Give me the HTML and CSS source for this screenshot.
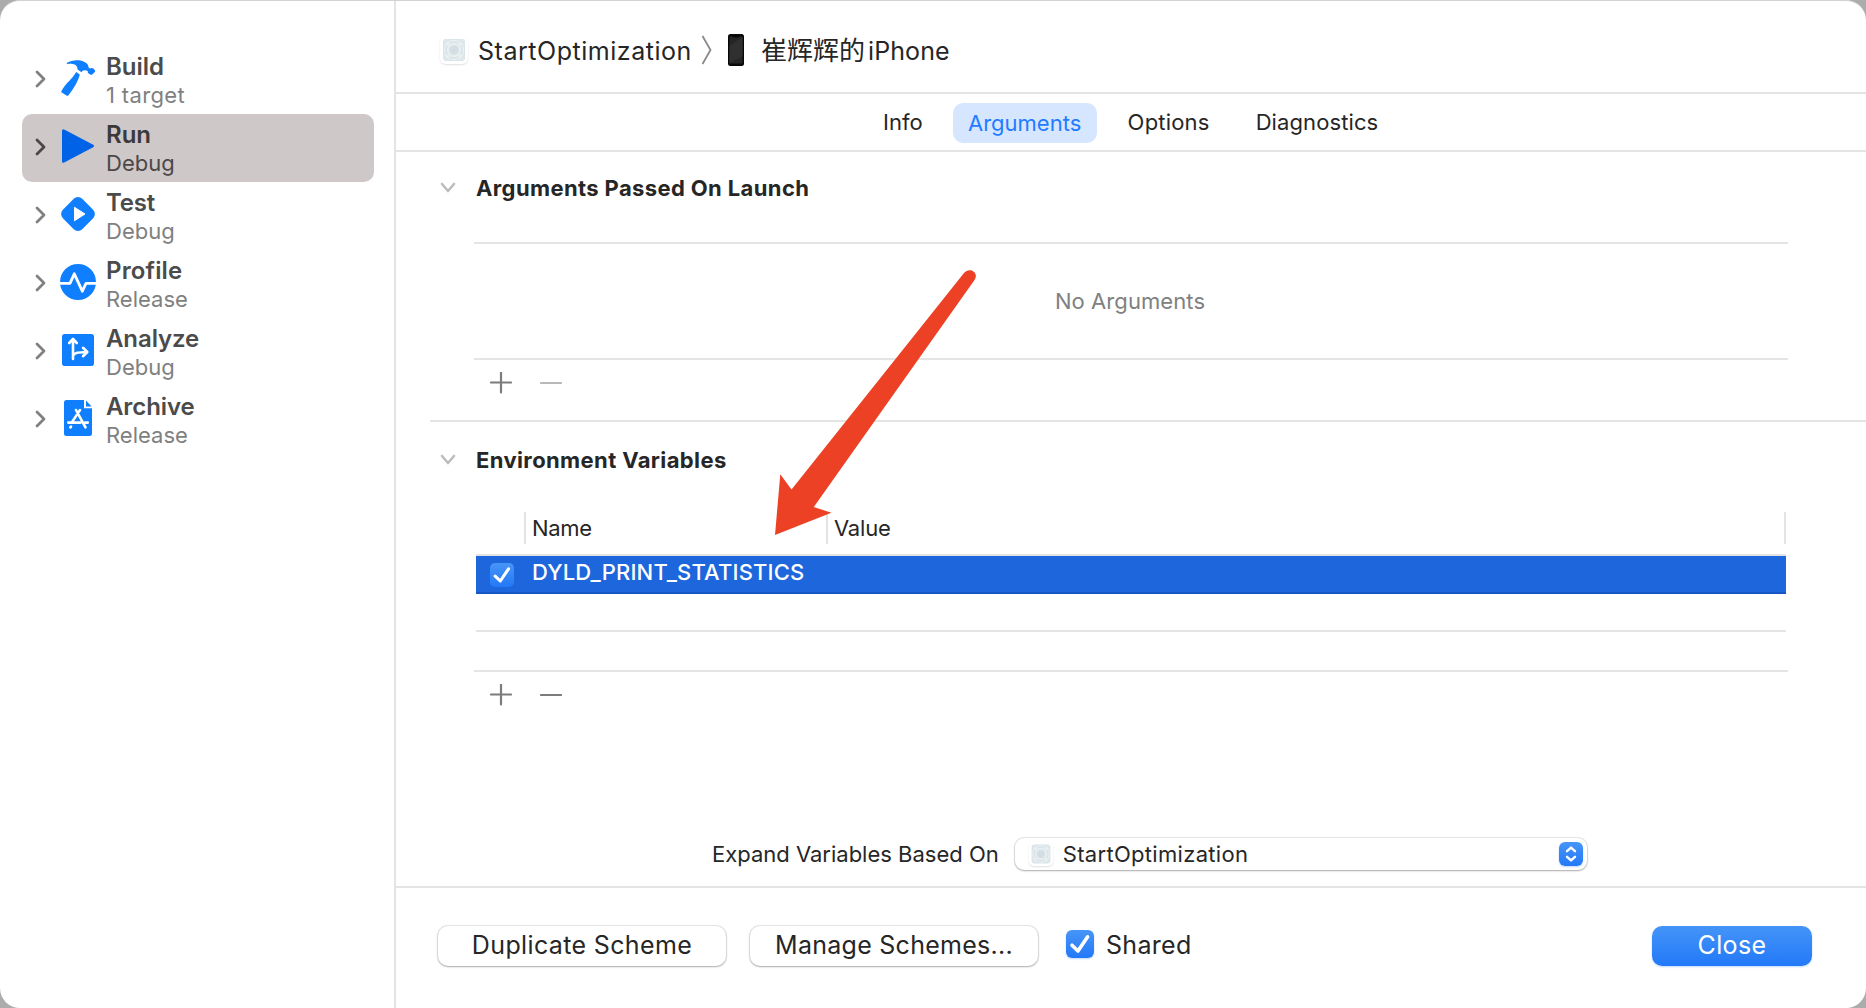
FILE: index.html
```html
<!DOCTYPE html>
<html lang="en">
<head>
<meta charset="utf-8">
<title>Scheme Editor</title>
<link rel="stylesheet" href="styles.css">
</head>
<body>
<svg class="defs" width="0" height="0" aria-hidden="true">
  <symbol id="chev-right" viewBox="0 0 12 18"><path d="M2 2 L9 9 L2 16" fill="none" stroke="currentColor" stroke-width="2.8" stroke-linecap="round" stroke-linejoin="round"/></symbol>
  <symbol id="chev-down" viewBox="0 0 16 12"><path d="M2 2 L8 9 L14 2" fill="none" stroke="#bdbdbd" stroke-width="2.6" stroke-linecap="round" stroke-linejoin="round"/></symbol>
  <symbol id="plus" viewBox="0 0 22 22"><path d="M1 10.5H21M11 .5V20.5" fill="none" stroke="currentColor" stroke-width="2.2" stroke-linecap="round"/></symbol>
  <symbol id="minus" viewBox="0 0 22 22"><path d="M1 11H21" fill="none" stroke="currentColor" stroke-width="2.1" stroke-linecap="round"/></symbol>
  <symbol id="check" viewBox="0 0 28 28"><path d="M6 15.2 L12 21 L21.6 6.8" fill="none" stroke="#fff" stroke-width="3.6" stroke-linecap="round" stroke-linejoin="round"/></symbol>
  <symbol id="app" viewBox="0 0 28 28">
    <rect x="3" y="3" width="22" height="22" rx="3" fill="#dae4e8"/>
    <g fill="none" stroke="#f4f8f9" stroke-width=".8">
      <circle cx="14" cy="14" r="9.6"/><circle cx="14" cy="14" r="6.2"/>
      <path d="M3 8H25M3 20H25M8 3V25M20 3V25M3 3L25 25M25 3L3 25" opacity=".6"/>
    </g>
    <circle cx="14" cy="14" r="4" fill="#d2dee3"/>
  </symbol>
</svg>

<div class="window">
  <nav class="sidebar">
    <div class="phase">
      <svg class="disclosure"><use href="#chev-right"/></svg>
      <svg class="icon" viewBox="0 0 36 36"><path fill="#0f7fff" d="M7.2 2.8 C12 -.2 20 -.6 25.5 2.4 C27.6 3.6 28.6 5.3 28.4 7.2 L30 8.5 C31 7.6 32.5 7.8 33.4 8.6 L34.7 9.9 C35.3 10.6 35.2 11.3 34.8 11.9 L32.2 14.4 C31.6 15 30.9 15 30.2 14.5 L28.3 13.2 C27.6 12.6 27.6 11.8 27.8 11 C25.6 9.8 23.6 9.9 22.3 11 L21.5 12.3 L17.6 9.6 C17.7 6.7 15.7 4.2 12.6 3.9 C10.7 3.6 8.8 3.8 7.4 4 C6.7 4 6.6 3.2 7.2 2.8 Z M16.2 12 L19.8 14.6 C18.2 21 14 28.5 8.5 35.2 C8 35.9 7.4 36 6.8 35.7 L1.8 32.6 C1.2 32.2 1.1 31.6 1.5 31 C5.4 24 10 20.5 13.5 16 Z"/></svg>
      <div class="label"><b>Build</b><span class="target">1 target</span></div>
    </div>
    <div class="phase selected">
      <svg class="disclosure"><use href="#chev-right"/></svg>
      <svg class="icon" viewBox="0 0 36 36"><path fill="#0062e6" stroke="#0062e6" stroke-width="3" stroke-linejoin="round" d="M3.5 2.8 L32.5 18 L3.5 33.2 Z"/></svg>
      <div class="label"><b>Run</b><span>Debug</span></div>
    </div>
    <div class="phase">
      <svg class="disclosure"><use href="#chev-right"/></svg>
      <svg class="icon" viewBox="0 0 36 36"><rect x="4.3" y="4.3" width="27.4" height="27.4" rx="6" transform="rotate(45 18 18)" fill="#0f7fff"/><path fill="#fff" stroke="#fff" stroke-linejoin="round" d="M14.5 11.3 L25 18 L14.5 24.7 Z"/></svg>
      <div class="label"><b class="tight">Test</b><span>Debug</span></div>
    </div>
    <div class="phase">
      <svg class="disclosure"><use href="#chev-right"/></svg>
      <svg class="icon" viewBox="0 0 36 36"><circle cx="18" cy="18" r="18" fill="#0f7fff"/><path fill="none" stroke="#fff" stroke-width="2.8" stroke-linejoin="round" d="M0 19.3H10 L14.3 9.8 L22.3 27.2 L26 19.3H36"/></svg>
      <div class="label"><b class="wide">Profile</b><span>Release</span></div>
    </div>
    <div class="phase">
      <svg class="disclosure"><use href="#chev-right"/></svg>
      <svg class="icon" viewBox="0 0 36 36"><rect x="2" y="2" width="32" height="32" rx="2.8" fill="#0f7fff"/><g fill="none" stroke="#fff" stroke-width="2.6" stroke-linecap="round" stroke-linejoin="round"><path d="M13 27V8M9.2 11 L13 7 L16.8 11M13 23.5 C14.8 20.6 18 20.4 27 20M23 15.8 L27.3 20 L23 24.2"/></g></svg>
      <div class="label"><b class="snug">Analyze</b><span>Debug</span></div>
    </div>
    <div class="phase">
      <svg class="disclosure"><use href="#chev-right"/></svg>
      <svg class="icon" viewBox="0 0 36 36"><path fill="#0f7fff" d="M6.5 0H24V8.3H32V33.5A2.5 2.5 0 0 1 29.5 36H6.5A2.5 2.5 0 0 1 4 33.5V2.5A2.5 2.5 0 0 1 6.5 0Z M26 .6 L31.6 6.4H26Z"/><g fill="none" stroke="#fff" stroke-width="2.6" stroke-linecap="round"><path d="M16 10 L25.5 27.4M20 10 L11.8 22.4M8.3 22.6H20.5M25 22.6H27.8M11 26.6 L10.4 27.4"/></g></svg>
      <div class="label"><b class="snug">Archive</b><span>Release</span></div>
    </div>
  </nav>

  <main class="main">
    <header class="path">
      <svg class="appicon"><use href="#app"/></svg>
      <span class="scheme">StartOptimization</span>
      <svg class="sep" width="12" height="30" viewBox="0 0 12 30"><path d="M1.5 1 L9.5 15 L1.5 29" fill="none" stroke="#8a8a8a" stroke-width="1.8"/></svg>
      <svg class="phone" width="16" height="32" viewBox="0 0 16 32"><rect width="16" height="32" rx="2.5" fill="#080808"/><path d="M1.5 2.5H4.5L5 3.5H11L11.5 2.5H14.5V29.5H1.5Z" fill="#262626"/><path d="M14.5 3V22L1.5 29V12Z" fill="#303030"/></svg>
      <span class="device"><span lang="zh" class="zh">崔辉辉的</span>iPhone</span>
    </header>

    <div class="tabs">
      <span class="tab">Info</span>
      <span class="tab active">Arguments</span>
      <span class="tab options">Options</span>
      <span class="tab diagnostics">Diagnostics</span>
    </div>

    <div class="content">
      <section class="launch">
        <h2><svg class="fold"><use href="#chev-down"/></svg>Arguments Passed On Launch</h2>
        <div class="empty">No Arguments</div>
        <div class="tools"><svg><use href="#plus"/></svg><svg class="dim"><use href="#minus"/></svg></div>
      </section>

      <section class="env">
        <h2><svg class="fold"><use href="#chev-down"/></svg>Environment Variables</h2>
        <div class="table">
          <div class="thead"><span class="th name">Name</span><span class="th value">Value</span></div>
          <div class="row on"><svg class="cb small"><use href="#check"/></svg><span>DYLD_PRINT_STATISTICS</span></div>
          <div class="row blank"></div>
        </div>
        <div class="tools"><svg><use href="#plus"/></svg><svg><use href="#minus"/></svg></div>
      </section>

      <div class="expand">
        <span>Expand Variables Based On</span>
        <div class="popup">
          <svg class="appicon"><use href="#app"/></svg>
          <span>StartOptimization</span>
          <svg class="stepper" viewBox="0 0 24 24"><path d="M8 9.2 L12 5.6 L16 9.2M8 14.8 L12 18.4 L16 14.8" fill="none" stroke="#fff" stroke-width="2.4" stroke-linecap="round" stroke-linejoin="round"/></svg>
        </div>
      </div>
    </div>

    <footer class="footer">
      <div class="button">Duplicate Scheme</div>
      <div class="button manage">Manage Schemes...</div>
      <svg class="cb"><use href="#check"/></svg>
      <span class="shared">Shared</span>
      <div class="close">Close</div>
    </footer>
  </main>

  <svg class="arrow" width="204" height="268" viewBox="0 0 204 268"><path fill="#ec4125" d="M0 267 L5.3 206.3 L16.5 221.6 L188 6.2 C191 2 196 .6 199.4 4.2 C201.6 7.2 201.2 9.4 199 12.8 L38.8 239 L56.4 244.8 Z"/></svg>
</div>
</body>
</html>
```
FILE: styles.css
```css
* { box-sizing: border-box; }
body {
  margin: 0;
  background: #acacac;
  color: #262626;
  font: 400 22px/28px Inter, "Noto Sans CJK SC", sans-serif;
}
svg { display: block; flex: none; }
.defs { position: absolute; }
.window {
  position: relative;
  display: flex;
  width: 1866px;
  height: 1008px;
  border-radius: 20px;
  border-top: 1px solid #d2d2d2;
  background: #fff;
  overflow: hidden;
  white-space: nowrap;
}

/* Sidebar */
.sidebar {
  width: 396px;
  flex: none;
  border-right: 2px solid #e4e4e4;
  padding: 45px 20px 0 22px;
}
.phase {
  display: flex;
  align-items: flex-start;
  height: 68px;
  padding-left: 12px;
  border-radius: 10px;
  color: #808080;
}
.phase.selected { background: #cec8c8; color: #4c4747; }
.disclosure { width: 12px; height: 18px; margin: 24px 13px 0 1px; }
.icon { width: 36px; height: 36px; margin: 14px 10px 0 0; }
.label { display: flex; flex-direction: column; padding-top: 6px; }
.label b { font-size: 24px; line-height: 29px; font-weight: 600; color: #4b4b4b; }
.selected b { color: #3b3939; }
.label b.tight { letter-spacing: -.2px; }
.label b.snug { letter-spacing: -.1px; }
.label b.wide { letter-spacing: .15px; }
.label .target { letter-spacing: .35px; }

/* Main column */
.main { flex: 1; display: flex; flex-direction: column; min-width: 0; }
.path {
  height: 93px;
  flex: none;
  display: flex;
  align-items: center;
  padding: 7px 0 0 44px;
  border-bottom: 2px solid #e4e4e4;
  font-size: 25px;
  line-height: 32px;
}
.appicon { width: 28px; height: 28px; border-radius: 6px; box-shadow: 0 1px 2px rgba(0, 0, 0, .13); }
.scheme { width: 223px; margin-left: 10px; padding-top: 2px; letter-spacing: .53px; }
.sep { margin-right: 15px; }
.phone { margin-right: 17px; }
.device { letter-spacing: .1px; }
.zh { font: 26px/32px "Noto Sans CJK SC", sans-serif; letter-spacing: 0; margin-right: 3px; }
.tabs {
  height: 58px;
  flex: none;
  display: flex;
  align-items: center;
  padding-left: 472px;
  border-bottom: 2px solid #e4e4e4;
}
.tab { padding: 6px 15px; }
.tab.active {
  width: 144px;
  margin: 1px 16px 0 15px;
  padding: 6px 0;
  text-align: center;
  border-radius: 10px;
  background: #d5e6fe;
  color: #237cff;
}
.tab.options { letter-spacing: .2px; margin-right: 16px; }
.tab.diagnostics { letter-spacing: .1px; }

.content { flex: 1; display: flex; flex-direction: column; }
section h2 {
  display: flex;
  align-items: center;
  margin: 0;
  height: 28px;
  font-size: 22px;
  font-weight: 700;
  letter-spacing: .38px;
}
.fold { width: 16px; height: 12px; margin: 0 20px 0 10px; }
.launch {
  height: 270px;
  margin-left: 34px;
  padding-top: 22px;
  border-bottom: 2px solid #e4e4e4;
}
.launch h2 { margin-bottom: 40px; }
.empty {
  width: 1314px;
  height: 118px;
  margin-left: 44px;
  padding-right: 2px;
  border: solid #e4e4e4;
  border-width: 2px 0;
  line-height: 114px;
  text-align: center;
  letter-spacing: .08px;
  color: #808080;
}
.tools { display: flex; gap: 28px; margin: 12px 0 0 60px; color: #7c7c7c; }
.tools svg { width: 22px; height: 22px; }
.tools .dim { color: #b9b9b9; }
.env { margin-left: 34px; padding-top: 24px; }
.env h2 { margin-bottom: 38px; }
.table { width: 1314px; margin-left: 44px; padding: 0 2px; border-bottom: 2px solid #e4e4e4; }
.thead {
  display: flex;
  height: 44px;
  padding-left: 48px;
  border-bottom: 2px solid #e4e4e4;
}
.th { height: 32px; line-height: 32px; padding-left: 6px; border-left: 2px solid #e4e4e4; }
.th.name { width: 302px; letter-spacing: -.3px; }
.th.value { flex: 1; border-right: 2px solid #e4e4e4; letter-spacing: -.2px; }
.row.on {
  display: flex;
  height: 38px;
  padding: 2px 0 0 14px;
  border-bottom: 2px solid #1757c5;
  background: #1d66dc;
  color: #fff;
  font-weight: 500;
  letter-spacing: .18px;
}
.row.blank { height: 38px; border-bottom: 2px solid #e4e4e4; margin-bottom: 38px; }
.cb {
  width: 28px;
  height: 28px;
  border-radius: 6px;
  background: linear-gradient(#4795f8, #2379f7);
  box-shadow: 0 1px 2px rgba(35, 121, 247, .3);
}
.cb.small { width: 24px; height: 24px; margin: 5px 18px 0 0; border-radius: 5px; box-shadow: none; }

.expand { display: flex; align-items: center; margin: auto 0 16px 316px; }
.popup {
  display: flex;
  align-items: center;
  width: 572px;
  height: 32px;
  margin-left: 16px;
  padding: 0 4px 0 14px;
  border-radius: 9px;
  background: #fff;
  box-shadow: 0 0 1px 1px rgba(0, 0, 0, .1), 0 1px 2px rgba(0, 0, 0, .25);
  letter-spacing: .31px;
}
.popup .appicon { width: 24px; height: 24px; margin-right: 10px; border-radius: 5px; }
.stepper { width: 24px; height: 24px; margin-left: auto; border-radius: 6px; background: linear-gradient(#4795f8, #2379f7); box-shadow: 0 1px 2px rgba(35, 121, 247, .3); }

.footer {
  height: 122px;
  flex: none;
  display: flex;
  border-top: 2px solid #e4e4e4;
  padding: 38px 54px 0 42px;
  font-size: 25px;
  line-height: 38px;
}
.button {
  width: 288px;
  height: 40px;
  margin-right: 24px;
  text-align: center;
  letter-spacing: .36px;
  border-radius: 10px;
  background: #fff;
  box-shadow: 0 0 1px 1px rgba(0, 0, 0, .1), 0 1px 2px rgba(0, 0, 0, .25);
}
.button.manage { margin-right: 28px; letter-spacing: .27px; }
.footer .cb { margin-top: 4px; }
.shared { margin-left: 12px; letter-spacing: .3px; }
.close {
  width: 160px;
  height: 40px;
  margin-left: auto;
  text-align: center;
  letter-spacing: .35px;
  color: #fff;
  border-radius: 10px;
  background: linear-gradient(#4494f8, #2379f7);
  box-shadow: 0 1px 2px rgba(35, 121, 247, .3);
}

/* Pointer drawn over the dialog */
.arrow { position: absolute; left: 775px; top: 267px; }
```
